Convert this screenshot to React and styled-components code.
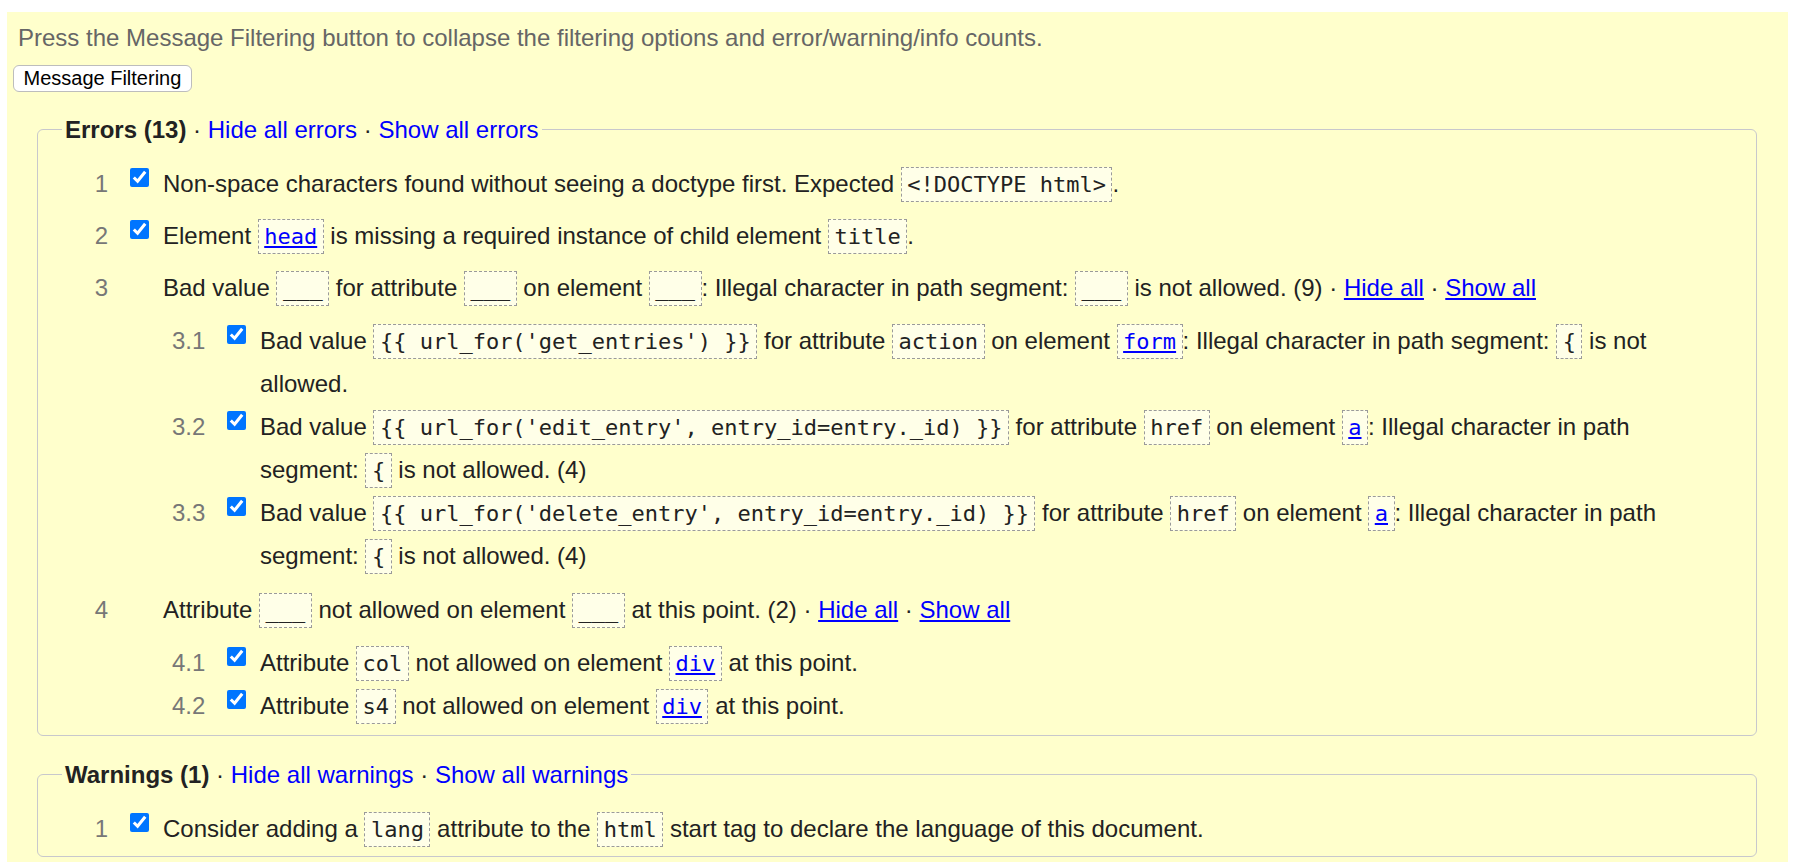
import React from 'react';
import styled, { createGlobalStyle } from 'styled-components';

const Global = createGlobalStyle`
  html, body { margin: 0; padding: 0; background: #fff; overflow: hidden; }
  body {
    font-family: "Liberation Sans", Arial, sans-serif;
    font-size: 24px;
    color: #222;
  }
`;

const Panel = styled.section`
  margin: 12px 9px 0 7px;
  min-height: calc(100vh - 12px);
  background: #ffffcc;
  padding: 12px 0 0;
  box-sizing: border-box;
`;

const Intro = styled.p`
  margin: 0;
  padding: 0 11px;
  color: #666;
  line-height: 28px;
`;

const FilterButton = styled.button`
  display: block;
  margin: 12.5px 0 0 6px;
  height: 27px;
  padding: 0 9.5px;
  border: 1px solid #bdbdbd;
  border-radius: 6px;
  background: #fff;
  color: #000;
  font-family: "Liberation Sans", Arial, sans-serif;
  font-size: 20px;
  line-height: 25px;
`;

const Group = styled.fieldset`
  margin: ${p => p.$mt}px 31px 0 30px;
  border: 1px solid #c8c8cc;
  border-radius: 6px;
  padding: 18px 40px 6px 0;
  min-width: 0;
`;

const Legend = styled.legend`
  margin-left: 24px;
  padding: 0 3px;
  line-height: 28px;
  color: #222;
`;

const LegendTitle = styled.strong`
  font-weight: bold;
  color: #222;
`;

const LegendLink = styled.a`
  color: #0000ff;
  text-decoration: none;
  cursor: pointer;
`;

const List = styled.ol`
  list-style: none;
  margin: ${p => (p.$nested ? '10px 0 2px 9px' : '0 0 0 37px')};
  padding: 0;
  display: flex;
  flex-direction: column;
  gap: ${p => (p.$nested ? 0 : 9)}px;
`;

const Item = styled.li`
  display: grid;
  grid-template-columns: 55px 33px 1fr;
  line-height: 43px;
`;

const Num = styled.span`
  text-align: right;
  padding-right: 22px;
  color: #777;
`;

const Check = styled.input`
  width: 19px;
  height: 19px;
  margin: 6px 0 0 0;
  align-self: start;
  accent-color: #0075ff;
`;

const Body = styled.div`
  min-width: 0;
`;

const Code = styled.code`
  display: inline-block;
  font-family: "DejaVu Sans Mono", "Liberation Mono", monospace;
  font-size: 22px;
  line-height: 33px;
  white-space: pre;
  padding: 0 5.5px;
  border: 1px dashed #9a9a9a;
  background: #ffffe8;
  color: #222;
`;

const Link = styled.a`
  color: #0000ff;
  text-decoration: underline;
  cursor: pointer;
`;

const Sep = () => <> · </>;

function Row({ num, checked, children, sub }) {
  return (
    <Item>
      <Num>{num}</Num>
      {checked ? <Check type="checkbox" defaultChecked /> : <span />}
      <Body>
        {children}
        {sub}
      </Body>
    </Item>
  );
}

export default function App() {
  return (
    <>
      <Global />
      <Panel>
        <Intro>
          Press the Message Filtering button to collapse the filtering options and error/warning/info counts.
        </Intro>
        <FilterButton type="button">Message Filtering</FilterButton>

        <Group $mt={24}>
          <Legend>
            <LegendTitle>Errors (13)</LegendTitle>
            <Sep />
            <LegendLink>Hide all errors</LegendLink>
            <Sep />
            <LegendLink>Show all errors</LegendLink>
          </Legend>
          <List>
            <Row num="1" checked>
              Non-space characters found without seeing a doctype first. Expected{' '}
              <Code>&lt;!DOCTYPE html&gt;</Code>.
            </Row>
            <Row num="2" checked>
              Element <Code><Link>head</Link></Code> is missing a required instance of child element{' '}
              <Code>title</Code>.
            </Row>
            <Row
              num="3"
              sub={
                <List $nested>
                  <Row num="3.1" checked>
                    Bad value <Code>{"{{ url_for('get_entries') }}"}</Code> for attribute{' '}
                    <Code>action</Code> on element <Code><Link>form</Link></Code>: Illegal character in path
                    segment: <Code>{'{'}</Code> is not allowed.
                  </Row>
                  <Row num="3.2" checked>
                    Bad value <Code>{"{{ url_for('edit_entry', entry_id=entry._id) }}"}</Code> for attribute{' '}
                    <Code>href</Code> on element <Code><Link>a</Link></Code>: Illegal character in path
                    segment: <Code>{'{'}</Code> is not allowed. (4)
                  </Row>
                  <Row num="3.3" checked>
                    Bad value <Code>{"{{ url_for('delete_entry', entry_id=entry._id) }}"}</Code> for attribute{' '}
                    <Code>href</Code> on element <Code><Link>a</Link></Code>: Illegal character in path
                    segment: <Code>{'{'}</Code> is not allowed. (4)
                  </Row>
                </List>
              }
            >
              Bad value <Code>___</Code> for attribute <Code>___</Code> on element <Code>___</Code>: Illegal
              character in path segment: <Code>___</Code> is not allowed. (9)
              <Sep />
              <Link>Hide all</Link>
              <Sep />
              <Link>Show all</Link>
            </Row>
            <Row
              num="4"
              sub={
                <List $nested>
                  <Row num="4.1" checked>
                    Attribute <Code>col</Code> not allowed on element <Code><Link>div</Link></Code> at this point.
                  </Row>
                  <Row num="4.2" checked>
                    Attribute <Code>s4</Code> not allowed on element <Code><Link>div</Link></Code> at this point.
                  </Row>
                </List>
              }
            >
              Attribute <Code>___</Code> not allowed on element <Code>___</Code> at this point. (2)
              <Sep />
              <Link>Hide all</Link>
              <Sep />
              <Link>Show all</Link>
            </Row>
          </List>
        </Group>

        <Group $mt={25}>
          <Legend>
            <LegendTitle>Warnings (1)</LegendTitle>
            <Sep />
            <LegendLink>Hide all warnings</LegendLink>
            <Sep />
            <LegendLink>Show all warnings</LegendLink>
          </Legend>
          <List>
            <Row num="1" checked>
              Consider adding a <Code>lang</Code> attribute to the <Code>html</Code> start tag to declare the
              language of this document.
            </Row>
          </List>
        </Group>
      </Panel>
    </>
  );
}
